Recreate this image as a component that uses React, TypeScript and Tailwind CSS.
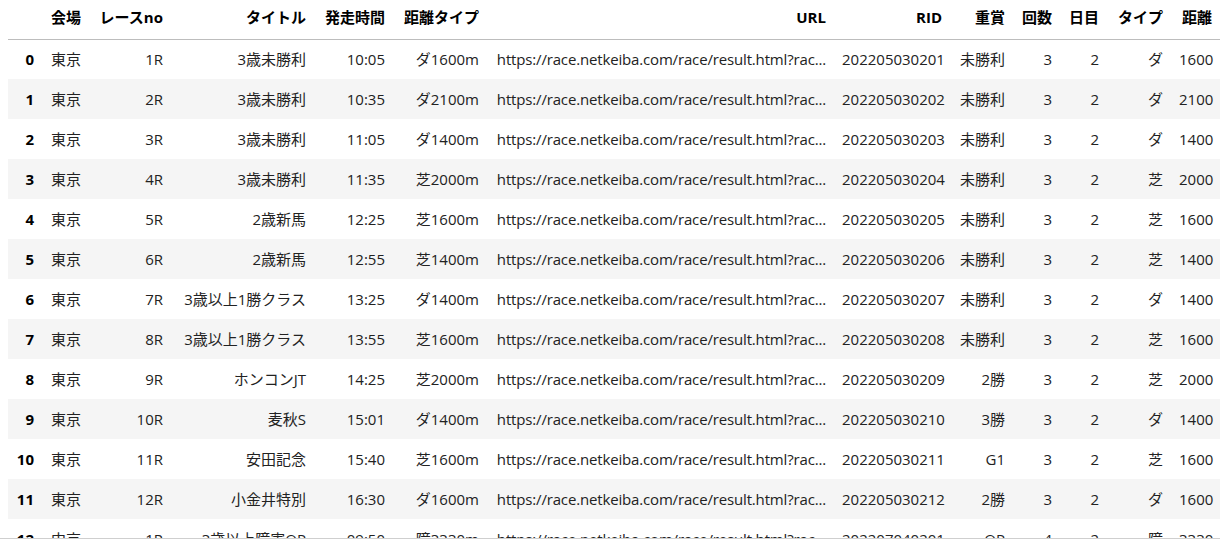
import React from 'react';

const URL_TEXT = 'https://race.netkeiba.com/race/result.html?rac...';

const columns = ['会場', 'レースno', 'タイトル', '発走時間', '距離タイプ', 'URL', 'RID', '重賞', '回数', '日目', 'タイプ', '距離'];
const widths = ['w-[48px]', 'w-[82px]', 'w-[143px]', 'w-[79px]', 'w-[94px]', 'w-[347px]', 'w-[116px]', 'w-[63px]', 'w-[47px]', 'w-[47px]', 'w-[64px]', 'w-[49px]'];

type Row = [string, string, string, string, string, string, string, string, string, string, string];

const rows: Row[] = [
  ['東京', '1R', '3歳未勝利', '10:05', 'ダ1600m', '202205030201', '未勝利', '3', '2', 'ダ', '1600'],
  ['東京', '2R', '3歳未勝利', '10:35', 'ダ2100m', '202205030202', '未勝利', '3', '2', 'ダ', '2100'],
  ['東京', '3R', '3歳未勝利', '11:05', 'ダ1400m', '202205030203', '未勝利', '3', '2', 'ダ', '1400'],
  ['東京', '4R', '3歳未勝利', '11:35', '芝2000m', '202205030204', '未勝利', '3', '2', '芝', '2000'],
  ['東京', '5R', '2歳新馬', '12:25', '芝1600m', '202205030205', '未勝利', '3', '2', '芝', '1600'],
  ['東京', '6R', '2歳新馬', '12:55', '芝1400m', '202205030206', '未勝利', '3', '2', '芝', '1400'],
  ['東京', '7R', '3歳以上1勝クラス', '13:25', 'ダ1400m', '202205030207', '未勝利', '3', '2', 'ダ', '1400'],
  ['東京', '8R', '3歳以上1勝クラス', '13:55', '芝1600m', '202205030208', '未勝利', '3', '2', '芝', '1600'],
  ['東京', '9R', 'ホンコンJT', '14:25', '芝2000m', '202205030209', '2勝', '3', '2', '芝', '2000'],
  ['東京', '10R', '麦秋S', '15:01', 'ダ1400m', '202205030210', '3勝', '3', '2', 'ダ', '1400'],
  ['東京', '11R', '安田記念', '15:40', '芝1600m', '202205030211', 'G1', '3', '2', '芝', '1600'],
  ['東京', '12R', '小金井特別', '16:30', 'ダ1600m', '202205030212', '2勝', '3', '2', 'ダ', '1600'],
  ['中京', '1R', '3歳以上障害OP', '09:50', '障3330m', '202207040201', 'OP', '4', '2', '障', '3330'],
];

export default function App() {
  return (
    <div
      className="h-[539px] overflow-hidden border-b border-[#cfcfcf] bg-white text-[15px] text-[#222]"
      style={{ fontFamily: '"Open Sans", "Noto Sans CJK JP", sans-serif' }}
    >
      <table className="ml-[8px] w-[1212px] table-fixed border-collapse">
        <thead>
          <tr className="h-[39px] border-b border-[#bdbdbd]">
            <th className="w-[33px]" />
            {columns.map((c, i) => (
              <th key={c} className={`${widths[i]} whitespace-nowrap px-[8px] pb-[4px] text-right font-bold text-black`}>
                {c}
              </th>
            ))}
          </tr>
        </thead>
        <tbody>
          {rows.map((r, idx) => {
            const cells = [...r.slice(0, 5), URL_TEXT, ...r.slice(5)];
            return (
              <tr key={idx} className={`h-[40px] ${idx % 2 === 1 ? 'bg-[#f5f5f5]' : 'bg-white'}`}>
                <th className="whitespace-nowrap pr-[7px] text-right font-bold text-black">{idx}</th>
                {cells.map((v, i) => (
                  <td
                    key={i}
                    className={`overflow-hidden whitespace-nowrap px-[8px] text-right ${i === 5 ? 'tracking-[-0.16px]' : ''}`}
                  >
                    {v}
                  </td>
                ))}
              </tr>
            );
          })}
        </tbody>
      </table>
    </div>
  );
}
